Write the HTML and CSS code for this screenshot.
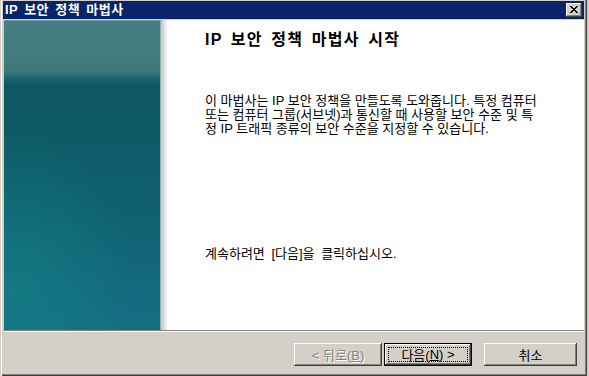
FILE: index.html
```html
<!DOCTYPE html>
<html>
  <head>
    <meta charset="utf-8">
    <title>IP 보안 정책 마법사</title>
    <link rel="stylesheet" href="styles.css">
  </head>
  <body>
    <div class="window">
      <div class="titlebar">
        <span class="title">IP 보안 정책 마법사</span>
        <button class="close" title="닫기">
          <svg width="8" height="7" viewBox="0 0 8 7" shape-rendering="crispEdges">
            <path d="M0 0h2v1h-2z M6 0h2v1h-2z M1 1h2v1h-2z M5 1h2v1h-2z M2 2h4v1h-4z M3 3h2v1h-2z M2 4h4v1h-4z M1 5h2v1h-2z M5 5h2v1h-2z M0 6h2v1h-2z M6 6h2v1h-2z" fill="#000"/>
          </svg>
        </button>
      </div>

      <div class="client">
        <div class="page">
          <div class="banner"></div>
          <div class="shade"></div>
          <div class="content">
            <h1>IP 보안 정책 마법사 시작</h1>
            <p class="intro">이 마법사는 IP 보안 정책을 만들도록 도와줍니다. 특정 컴퓨터<br>또는 컴퓨터 그룹(서브넷)과 통신할 때 사용할 보안 수준 및 특<br>정 IP 트래픽 종류의 보안 수준을 지정할 수 있습니다.</p>
            <p class="hint">계속하려면 [다음]을 클릭하십시오.</p>
          </div>
        </div>

        <div class="buttons">
          <button class="btn back" disabled>&lt; 뒤로(<u>B</u>)</button>
          <button class="btn next"><span class="focus">다음(<u>N</u>) &gt;</span></button>
          <button class="btn cancel">취소</button>
        </div>
      </div>
    </div>
  </body>
</html>
```

FILE: styles.css
```css
body {
  margin: 0;
  background-color: #d4d0c8;
  font-family: "Liberation Sans", "Noto Sans CJK KR", sans-serif;
  font-size: 13px;
  overflow: hidden;
}

.window {
  width: 587px;
  height: 378px;
  margin-top: -2px;
  padding: 3px;
  box-sizing: border-box;
  background-color: #d4d0c8;
  box-shadow: inset 1px 1px #d4d0c8, inset 2px 2px #ffffff,
              inset -1px -1px #404040, inset -2px -2px #808080;
  display: flex;
  flex-direction: column;
}

.titlebar {
  height: 18px;
  margin-bottom: 1px;
  background-color: #0a246a;
  display: flex;
  align-items: center;
  justify-content: space-between;
  padding: 0 2px 0 2px;
}

.title {
  color: #ffffff;
  font-weight: bold;
  font-size: 13px;
  letter-spacing: 0.5px;
  word-spacing: 2px;
  line-height: 18px;
}

.close {
  width: 16px;
  height: 14px;
  padding: 0;
  border: none;
  background-color: #d4d0c8;
  box-shadow: inset -1px -1px #404040, inset 1px 1px #ffffff,
              inset -2px -2px #808080, inset 2px 2px #d4d0c8;
  display: flex;
  align-items: center;
  justify-content: center;
}

.close svg {
  display: block;
  margin: 0 1px 1px 0;
}

.client {
  flex: 1;
  display: flex;
  flex-direction: column;
  padding-left: 1px;
}

.page {
  height: 310px;
  display: flex;
  background-color: #ffffff;
  border-bottom: 1px solid #808080;
  box-shadow: 0 1px #ffffff;
}

.banner {
  width: 157px;
  background:
    radial-gradient(ellipse 120px 160px at 10px 270px, rgba(18, 134, 136, 0.55), rgba(18, 134, 136, 0)),
    linear-gradient(to bottom, #467f81 0, #3e7a7c 50px, #1f6870 56px, #0d5763 64px, #0e5d6a 150px, #126678 240px, #166e82 310px);
  border-top: 1px solid #6f9a9b;
  border-right: 1px solid #8fb3b5;
  box-sizing: border-box;
}

.shade {
  width: 7px;
  background: linear-gradient(to right, #c4c4c4, #e8e8e8 60%, #ffffff);
}

.content {
  flex: 1;
  padding: 12px 0 0 37px;
  color: #000000;
}

h1 {
  margin: 0;
  font-size: 16px;
  line-height: 15px;
  letter-spacing: 1.2px;
  word-spacing: 3px;
  font-weight: bold;
}

.intro {
  margin: 47px 0 0 0;
  line-height: 14px;
  white-space: nowrap;
}

.hint {
  margin: 111px 0 0 0;
  line-height: 14px;
  word-spacing: 3px;
}

.buttons {
  flex: 1;
  display: flex;
  justify-content: flex-end;
  align-items: flex-start;
  padding: 11px 7px 0 0;
  margin-top: 1px;
}

.btn {
  height: 23px;
  padding: 0;
  border: none;
  background-color: #d4d0c8;
  font-family: "Liberation Sans", "Noto Sans CJK KR", sans-serif;
  font-size: 13px;
  color: #000000;
  box-shadow: inset -1px -1px #404040, inset 1px 1px #ffffff,
              inset -2px -2px #808080, inset 2px 2px #d4d0c8;
}

.back {
  width: 88px;
  margin-right: 2px;
  color: #808080;
  text-shadow: 1px 1px #ffffff;
}

.next {
  width: 88px;
  border: 1px solid #000000;
  display: flex;
  padding: 3px;
}

.focus {
  flex: 1;
  border: 1px dotted #000000;
  display: flex;
  align-items: center;
  justify-content: center;
}

.cancel {
  width: 93px;
  margin-left: 12px;
}
```
